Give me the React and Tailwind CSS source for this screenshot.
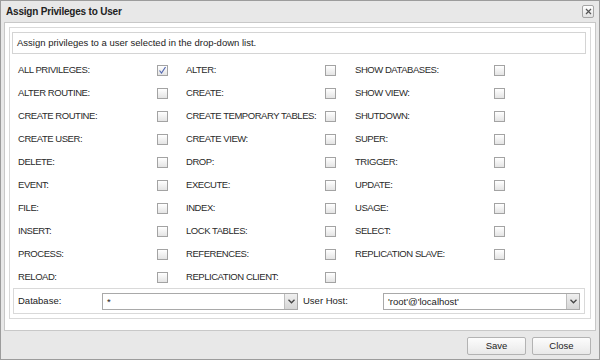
import React from "react";

const rows = [
    ["ALL PRIVILEGES:", true, "ALTER:", false, "SHOW DATABASES:", false],
    ["ALTER ROUTINE:", false, "CREATE:", false, "SHOW VIEW:", false],
    ["CREATE ROUTINE:", false, "CREATE TEMPORARY TABLES:", false, "SHUTDOWN:", false],
    ["CREATE USER:", false, "CREATE VIEW:", false, "SUPER:", false],
    ["DELETE:", false, "DROP:", false, "TRIGGER:", false],
    ["EVENT:", false, "EXECUTE:", false, "UPDATE:", false],
    ["FILE:", false, "INDEX:", false, "USAGE:", false],
    ["INSERT:", false, "LOCK TABLES:", false, "SELECT:", false],
    ["PROCESS:", false, "REFERENCES:", false, "REPLICATION SLAVE:", false],
    ["RELOAD:", false, "REPLICATION CLIENT:", false, null, false],
];

const Checkbox = ({checked}) => (
    <div className="w-[11px] h-[11px] border border-[#a3a3a3] bg-gradient-to-b from-white to-[#e4e4e4] flex items-center justify-center">
        {checked && (
            <svg width="9" height="9" viewBox="0 0 9 9">
                <path d="M1.5 4.5 L3.5 7 L7.5 1" fill="none" stroke="#5468b0" strokeWidth="1.2" />
            </svg>
        )}
    </div>
);

const Cell = ({label, checked}) => {
    if (!label) return <div />;
    return (
        <div className="flex items-center h-[23px] pt-[1px]">
            <span className="w-[139px] text-[9.5px] tracking-[-0.45px] text-[#2a2a2a] whitespace-nowrap">{label}</span>
            <Checkbox checked={checked} />
        </div>
    );
};

const Select = ({value, width}) => (
    <div className={`${width} h-[17px] border border-[#a9a9a9] bg-white flex items-stretch`}>
        <span className="flex-1 pl-[4px] text-[9.5px] leading-[15px] text-[#222]">{value}</span>
        <div className="w-[13px] border-l border-[#bdbdbd] bg-gradient-to-b from-[#f0f0f0] to-[#d6d6d6] flex items-center justify-center">
            <svg width="7" height="5" viewBox="0 0 7 5">
                <path d="M0.5 0.8 L3.5 3.8 L6.5 0.8" fill="none" stroke="#444" strokeWidth="1.3" />
            </svg>
        </div>
    </div>
);

const Button = ({children}) => (
    <button className="w-[59px] h-[18px] border border-[#b3b3b3] rounded-[2px] bg-gradient-to-b from-[#fcfcfc] to-[#e9e9e9] text-[9.5px] text-[#222]">
        {children}
    </button>
);

const App = () => {
    return (
        <div className="w-[600px] h-[360px] flex flex-col bg-[#e8e8e8] border border-[#9c9c9c] font-['Liberation_Sans',Arial,sans-serif]">

            <div className="h-[21px] flex items-center justify-between pl-[5px] pr-[5px]">
                <span className="text-[10px] font-bold tracking-[-0.2px] text-[#222]">Assign Privileges to User</span>
                <div className="w-[12px] h-[13px] border border-[#a5a5a5] rounded-[2px] bg-gradient-to-b from-white to-[#e2e2e2] flex items-center justify-center">
                    <svg width="7" height="7" viewBox="0 0 7 7">
                        <path d="M1 1 L6 6 M6 1 L1 6" stroke="#555" strokeWidth="1.2" />
                    </svg>
                </div>
            </div>

            <div className="mx-[3px] h-[309px] bg-white border border-[#c8c8c8] px-[4px] pt-[4px] pb-[10px]">
                <div className="h-[292px] border border-[#d9d9d9] pl-[2px] pr-[4px] pt-[4px]">

                    <div className="h-[22px] border border-[#d4d4d4] pl-[4px] flex items-center">
                        <span className="text-[9.5px] text-[#222]">Assign privileges to a user selected in the drop-down list.</span>
                    </div>

                    <div className="mt-[4px] pl-[6px] grid grid-cols-[168px_169px_169px]">
                        {rows.map((r, i) => (
                            <React.Fragment key={i}>
                                <Cell label={r[0]} checked={r[1]} />
                                <Cell label={r[2]} checked={r[3]} />
                                <Cell label={r[4]} checked={r[5]} />
                            </React.Fragment>
                        ))}
                    </div>

                    <div className="ml-[1px] mr-[1px] h-[26px] border border-[#d9d9d9] pl-[4px] flex items-center">
                        <span className="w-[84px] text-[9.5px] text-[#222]">Database:</span>
                        <Select value="*" width="w-[196px]" />
                        <span className="ml-[5px] w-[80px] text-[9.5px] text-[#222]">User Host:</span>
                        <Select value="'root'@'localhost'" width="w-[197px]" />
                    </div>

                </div>
            </div>

            <div className="flex-1 flex justify-end items-start pt-[6px] pr-[8px] gap-[6px]">
                <Button>Save</Button>
                <Button>Close</Button>
            </div>

        </div>
    );
};

export default App;
